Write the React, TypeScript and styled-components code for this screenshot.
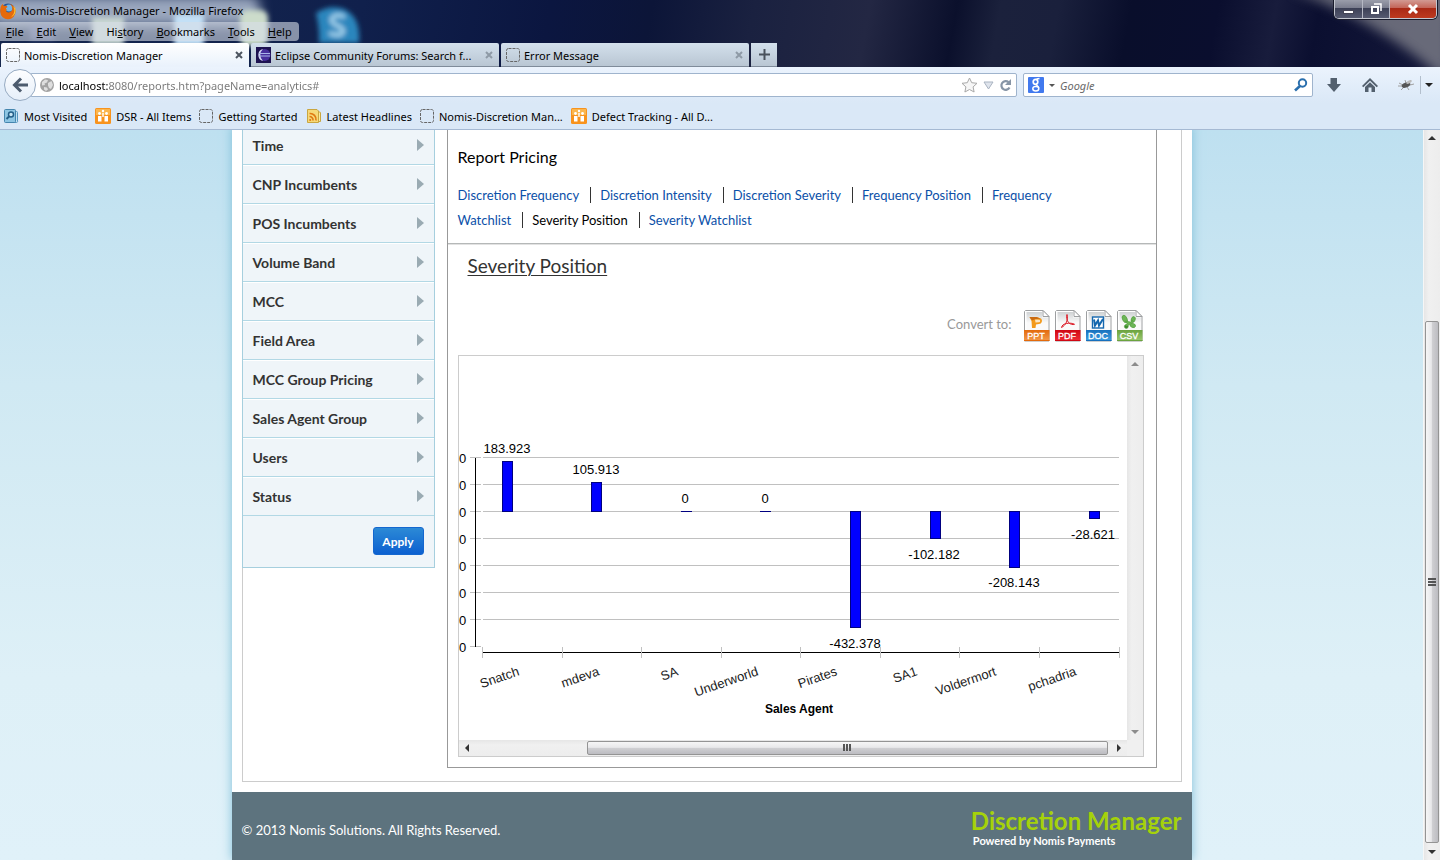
import React from "react";
import styled, { createGlobalStyle, css } from "styled-components";

const uiFont = `"Noto Sans", "Open Sans", sans-serif`;
const pageFont = `Lato, "Open Sans", sans-serif`;

const GlobalStyle = createGlobalStyle`
  * { box-sizing: border-box; }
  body { margin: 0; background: #0c1433; overflow: hidden; }
  button, input { font: inherit; }
  button { padding: 0; border: 0; background: none; color: inherit; }
  ul { list-style: none; margin: 0; padding: 0; }
`;

/* ---------- browser window ---------- */

const Window = styled.div`
  display: flex;
  flex-direction: column;
  height: 100vh;
  font-family: ${uiFont};
  font-size: 11px;
  color: #000;
`;

const TitleArea = styled.header`
  position: relative;
  isolation: isolate;
  display: flex;
  flex-direction: column;
  flex: none;
  overflow: hidden;
  background: linear-gradient(100deg, #16284e 0%, #10204c 25%, #0b1640 38%, #0c1538 45%, #1a2140 52%, #232743 60%, #0b102c 66%, #1b213c 69%, #1a203c 73%, #090e2b 78%, #0a0e2e 84%, #181c3c 88%, #0b0f30 91%, #14183a 100%);
`;

const Wallpaper = styled.svg`
  position: absolute;
  inset: 0;
  width: 100%;
  height: 100%;
  z-index: -1;
`;

const TitleRow = styled.div`
  display: flex;
  height: 22px;
`;

const WindowTitle = styled.h1`
  display: flex;
  align-items: center;
  gap: 5px;
  margin: 0;
  flex: 1;
  font-size: 11px;
  line-height: 20px;
  font-weight: 400;
`;

const WindowButtons = styled.div`
  display: flex;
  height: 19px;
  margin-right: 3px;
  border: 1px solid #c3c6cf;
  border-top: 0;
  border-radius: 0 0 5px 5px;
  overflow: hidden;
  box-shadow: 0 0 0 1px #1a1c2c;
`;

const WindowButton = styled.button<{ $close?: boolean }>`
  display: flex;
  align-items: center;
  justify-content: center;
  width: ${(p) => (p.$close ? 47 : 27)}px;
  background: ${(p) =>
    p.$close
      ? "linear-gradient(#d29a92 0, #c4675a 42%, #a92a16 46%, #bd3a20 100%)"
      : "linear-gradient(#9a9daa 0, #7b7e8f 42%, #3c4056 46%, #565a70 100%)"};
  & + & { border-left: 1px solid #b5b8c4; }
`;

const MenuBar = styled.nav`
  display: flex;
  align-self: flex-start;
  gap: 1px;
  height: 19px;
  padding-right: 1px;
  background: rgba(215, 221, 232, 0.6);
  border-radius: 0 4px 4px 0;
`;

const MenuItem = styled.button`
  padding: 0 6px;
  line-height: 19px;
`;

const TabStrip = styled.div`
  display: flex;
  gap: 2px;
  height: 24px;
  margin-top: 2px;
  padding-left: 1px;
`;

const Tab = styled.div<{ $active?: boolean }>`
  display: flex;
  align-items: center;
  gap: 4px;
  width: 248px;
  padding: 1px 6px 0 5px;
  background: ${(p) => (p.$active ? "linear-gradient(#ffffff, #eaf2fc)" : "linear-gradient(#d3e0ec, #b9c6d3)")};
  border-bottom: 1px solid ${(p) => (p.$active ? "#eaf2fc" : "#7f8b9a")};
  border-radius: 2px 2px 0 0;
`;

const TabLabel = styled.button`
  flex: 1;
  min-width: 0;
  text-align: left;
  white-space: nowrap;
`;

const IconButton = styled.button`
  display: flex;
  align-items: center;
  justify-content: center;
  flex: none;
`;

const NewTab = styled(IconButton)`
  width: 26px;
  background: linear-gradient(#d3e0ec, #b9c6d3);
  border-bottom: 1px solid #7f8b9a;
`;

const NavBar = styled.div`
  display: flex;
  align-items: center;
  flex: none;
  height: 36px;
  padding: 0 7px 0 4px;
  background: linear-gradient(#ebf3fd, #dae8f7);
`;

const BackButton = styled(IconButton)`
  width: 32px;
  height: 32px;
  border: 1px solid #97abc2;
  border-radius: 50%;
  background: linear-gradient(#fdfeff, #e6eff9);
  z-index: 1;
`;

const Field = styled.div<{ $grow?: boolean }>`
  display: flex;
  align-items: center;
  height: 24px;
  background: #fff;
  border: 1px solid #9fb4cd;
  border-radius: 2px;
  ${(p) =>
    p.$grow
      ? css`flex: 1; margin-left: -6px; padding: 0 4px 0 9px; gap: 5px;`
      : css`width: 290px; margin-left: 6px; padding: 0 4px; gap: 5px;`}
`;

const FieldInput = styled.input<{ $url?: boolean }>`
  flex: 1;
  min-width: 0;
  height: 20px;
  padding: 0;
  border: 0;
  outline: 0;
  background: transparent;
  &::placeholder { color: #6a6a6a; font-style: italic; opacity: 1; }
  ${(p) =>
    p.$url &&
    css`
      background: linear-gradient(90deg, #000 49px, #777 49px);
      background-clip: text;
      -webkit-background-clip: text;
      color: transparent;
    `}
`;

const FieldIcons = styled.div`
  display: flex;
  align-items: center;
  gap: 5px;
`;

const ToolButtons = styled.div`
  display: flex;
  align-items: center;
  gap: 20px;
  margin-left: 13px;
`;

const ToolMenu = styled(IconButton)`
  height: 18px;
  padding-left: 4px;
  margin-left: 6px;
  border-left: 1px solid #b3bfcd;
`;

const BookmarkBar = styled.nav`
  display: flex;
  align-items: center;
  flex: none;
  gap: 8px;
  height: 27px;
  padding: 0 3px;
  background: #dae8f7;
  border-bottom: 1px solid #a5b9d3;
`;

const Bookmark = styled.a`
  display: flex;
  align-items: center;
  gap: 5px;
  color: #000;
  text-decoration: none;
  white-space: nowrap;
`;

/* ---------- scroll bars ---------- */

type Axis = "x" | "y";

const Track = styled.div<{ $axis: Axis }>`
  display: flex;
  flex: none;
  flex-direction: ${(p) => (p.$axis === "y" ? "column" : "row")};
  ${(p) => (p.$axis === "y" ? "width: 16px;" : "height: 16px;")}
  background: linear-gradient(${(p) => (p.$axis === "y" ? "90deg" : "180deg")}, #e6e6e6, #f0f0f0 30%, #ededed);
`;

const ScrollArrow = styled(IconButton)`
  width: 16px;
  height: 16px;
`;

const Gap = styled.div<{ $size: number }>`
  flex: ${(p) => p.$size} 0 0;
`;

const Thumb = styled.div<{ $axis: Axis; $size: number }>`
  flex: ${(p) => p.$size} 0 0;
  display: flex;
  align-items: center;
  justify-content: center;
  margin: ${(p) => (p.$axis === "y" ? "0 1px" : "1px 0")};
  border: 1px solid #949494;
  border-radius: 2px;
  background: linear-gradient(${(p) => (p.$axis === "y" ? "90deg" : "180deg")}, #f6f6f6 0, #e8e8ea 45%, #cfcfd2 52%, #bcbcc1 100%);
`;

const arrowPath = { up: "M0 6L4 2L8 6Z", down: "M0 2L4 6L8 2Z", left: "M6 0L2 4L6 8Z", right: "M2 0L6 4L2 8Z" };

function ScrollBar({ axis, before, size, after }: { axis: Axis; before: number; size: number; after: number }) {
  const first = axis === "y" ? "up" : "left";
  const last = axis === "y" ? "down" : "right";
  const ink = size ? "#333" : "#8c8c8c";
  return (
    <Track $axis={axis}>
      <ScrollArrow aria-label={`Scroll ${first}`}>
        <svg width="8" height="8"><path d={arrowPath[first]} fill={ink} /></svg>
      </ScrollArrow>
      <Gap $size={before} />
      {size > 0 && (
        <Thumb $axis={axis} $size={size}>
          <svg width="8" height="8" stroke="#555" strokeWidth="2">
            {axis === "y" ? <path d="M0 1H8M0 4H8M0 7H8" /> : <path d="M1 0V7M4 0V7M7 0V7" />}
          </svg>
        </Thumb>
      )}
      <Gap $size={after} />
      <ScrollArrow aria-label={`Scroll ${last}`}>
        <svg width="8" height="8"><path d={arrowPath[last]} fill={ink} /></svg>
      </ScrollArrow>
    </Track>
  );
}

/* ---------- web page ---------- */

const Viewport = styled.div`
  display: flex;
  flex: 1;
  min-height: 0;
`;

const Canvas = styled.div`
  display: flex;
  justify-content: center;
  flex: 1;
  min-width: 0;
  overflow: hidden;
  background: linear-gradient(#bee0f0 0, #d0e9f3 35%, #def0f7 75%, #e0f1f9 100%);
  border-right: 1px solid #f6f6f6;
  font-family: ${pageFont};
`;

const Page = styled.div`
  display: flex;
  flex-direction: column;
  width: 100%;
  max-width: 960px;
  margin-top: -4px;
  background: #fff;
  box-shadow: 0 0 10px #7fc0d8;
`;

const Body = styled.div`
  display: flex;
  align-items: flex-start;
  gap: 12px;
  margin: 0 10px 10px;
  padding: 0 24px 13px 0;
  border: 1px solid #ccc;
  border-top: 0;
  border-left: 0;
  box-shadow: inset 1px 0 #ccc;
`;

const Filters = styled.aside`
  width: 193px;
  flex: none;
  background: #eff5f9;
  border: 1px solid #a6cfde;
  border-top: 0;
`;

const FilterRow = styled.button`
  display: flex;
  align-items: center;
  justify-content: space-between;
  width: 100%;
  height: 39px;
  padding: 0 10px;
  border-bottom: 1px solid #b2d8e5;
  box-shadow: inset 0 1px #fff;
  font-size: 14px;
  font-weight: 700;
  color: #333;
`;

const FilterActions = styled.div`
  display: flex;
  justify-content: flex-end;
  padding: 11px 10px 12px;
`;

const ApplyButton = styled.button`
  width: 51px;
  height: 28px;
  border: 1px solid #1467cf;
  border-radius: 3px;
  background: linear-gradient(#2c8ad6, #0c60d0);
  color: #fff;
  font-size: 12px;
  font-weight: 700;
`;

const Panel = styled.main`
  flex: 1;
  min-width: 0;
  border: 1px solid #999;
  border-top: 0;
`;

const PanelHead = styled.div`
  padding: 19px 80px 10px 10px;
  border-bottom: 1px solid #b5b8b8;
  box-shadow: 0 1px #e2e2e2;
`;

const PanelTitle = styled.h2`
  margin: 0 0 14px;
  font-size: 16px;
  line-height: 24px;
  font-weight: 400;
`;

const ReportItem = styled.li`
  display: inline;
  font-size: 13px;
  line-height: 25px;
  &:not(:last-child) { border-right: 1px solid #333; margin-right: 9px; padding-right: 11px; }
`;

const ReportLink = styled.a<{ $current?: boolean }>`
  color: ${(p) => (p.$current ? "#000" : "#0b50a8")};
  text-decoration: none;
`;

const Report = styled.section`
  padding: 9px 12px 10px 10px;
`;

const ReportTitle = styled.h3`
  margin: 0 10px 31px;
  font-size: 19px;
  line-height: 26px;
  font-weight: 400;
  color: #333;
  text-decoration: underline;
  text-decoration-thickness: 1px;
  text-underline-offset: 2px;
`;

const Convert = styled.div`
  display: flex;
  align-items: center;
  justify-content: flex-end;
  gap: 5px;
  height: 32px;
  margin-bottom: 13px;
  padding-right: 1px;
  font-size: 13px;
  color: #999;
`;

const ConvertLabel = styled.span`
  margin-right: 7px;
  padding-bottom: 4px;
`;

const FileLink = styled.a`
  display: flex;
`;

const ChartFrame = styled.div`
  display: grid;
  grid-template-columns: minmax(0, 1fr) 16px;
  grid-template-rows: 384px 16px;
  border: 1px solid #ccc;
  background: #f0f0f0;
`;

const ChartPane = styled.div`
  overflow: hidden;
  background: #fff;
`;

const Footer = styled.footer`
  display: flex;
  justify-content: space-between;
  flex: 1 0 auto;
  padding: 14px 10px;
  background: #5d737e;
  color: #fff;
`;

const Copyright = styled.p`
  margin: 12px 0;
  font-size: 13px;
  line-height: 24px;
`;

const Brand = styled.div`
  color: #a5d20a;
  font-size: 24px;
  line-height: 30px;
  font-weight: 700;
`;

const BrandNote = styled.div`
  padding-left: 2px;
  color: #fff;
  font-size: 11px;
  line-height: 10px;
`;

/* ---------- icons ---------- */

const BlankIcon = () => (
  <svg width="14" height="14" fill="none" stroke="#666" strokeDasharray="3 1">
    <rect x=".5" y=".5" width="13" height="13" rx="2" />
  </svg>
);

const FirefoxIcon = () => (
  <svg width="16" height="18" viewBox="0 0 16 18">
    <circle cx="8" cy="9" r="7.5" fill="#24579c" />
    <circle cx="9" cy="6" r="3.5" fill="#72b5e8" />
    <path d="M.3 7C.5 4 2 2.500 3 2c0 1 .5 1.600 1 2 2-.5 3 0 3.500 1L5.500 6.500C7 7 7 8 6 9c1 2 4 2 6-.5 1-2-.2-5-2-6.500 3 .5 5.500 4 5.500 7.500A7.500 7.500 0 0 1 .3 10Z" fill="#e66a0c" />
    <path d="M13 4c2 3 2 8-2 11 3-1 5-4 4.600-7.500C15.300 6 14.500 5 13 4Z" fill="#f9c433" />
  </svg>
);

const EclipseIcon = () => (
  <svg width="15" height="16" viewBox="0 0 15 16">
    <rect width="15" height="16" fill="#1d1250" />
    <circle cx="8.500" cy="8" r="6" fill="#47309c" />
    <path d="M7 2A6.200 6.200 0 0 0 7 14A8 8 0 0 1 7 2Z" fill="#d8dcf4" />
    <path d="M3 6.500H14M3 9H14" stroke="#a9b4ea" />
  </svg>
);

const CloseIcon = ({ dim }: { dim?: boolean }) => (
  <svg width="8" height="8" stroke={dim ? "#8e9aa6" : "#4d5560"} strokeWidth="2"><path d="M1 1L7 7M7 1L1 7" /></svg>
);

const GlobeIcon = () => (
  <svg width="14" height="14">
    <circle cx="7" cy="7" r="7" fill="#a3a3a3" />
    <path d="M2 4L5 1.500 8 2 7 4.500 4.500 5.500 5 7 2 7.500ZM8 5l3.500-2L13 7l-2 4-2-1-1-2.500ZM4 9l3 .5 1 2-2 1.500-2-1.500Z" fill="#dedede" />
  </svg>
);

const MostVisitedIcon = () => (
  <svg width="16" height="16">
    <path d="M11 3.500h2.500a1 1 0 0 1 1 1V13a1 1 0 0 1-1 1.500H11Z" fill="#c4e2f2" stroke="#5596be" />
    <rect x="1.500" y="1.500" width="11" height="13" rx="1" fill="#8dc5e3" stroke="#4485ae" />
    <circle cx="8" cy="6.500" r="2.500" fill="#c8e6f5" stroke="#235f89" strokeWidth="1.500" />
    <path d="M6 8.500L3.500 11" stroke="#235f89" strokeWidth="2" />
  </svg>
);

const PeopleIcon = () => (
  <svg width="16" height="16">
    <rect width="16" height="16" rx="1.500" fill="#f8931d" />
    <rect x="1" y="1" width="14" height="6" fill="#fbb64e" />
    <circle cx="4.500" cy="5.500" r="1.400" fill="#fff" /><circle cx="11.500" cy="5.500" r="1.400" fill="#fff" /><circle cx="8" cy="3" r="1.200" fill="#fff" />
    <path d="M3 8h3.500v5.500H3ZM9.500 8H13v5.500H9.500ZM7.300 5h1.400v4H7.300Z" fill="#fff" />
  </svg>
);

const FeedIcon = () => (
  <svg width="16" height="16" fill="none">
    <path d="M11 4h2.500a1 1 0 0 1 1 1v8.500H11Z" fill="#fbeaa0" stroke="#c9a640" />
    <path d="M1.500 1.500H11L12.500 3V14.500H1.500Z" fill="#f6d978" stroke="#c9a640" />
    <path d="M3.500 5.500a6 6 0 0 1 6.500 7M3.500 8.500a3.500 3.500 0 0 1 3.500 4" stroke="#e07912" strokeWidth="1.600" />
    <circle cx="4.200" cy="12" r="1.100" fill="#e07912" />
  </svg>
);

const StarIcon = () => (
  <svg width="17" height="16"><path d="M8.500 1l2.200 4.700 5.300.6-3.900 3.600 1 5.100-4.600-2.500L3.900 15l1-5.100L1 6.300l5.300-.6Z" fill="#f6f6f6" stroke="#a8a8a8" /></svg>
);

const ReloadIcon = () => (
  <svg width="13" height="13" fill="none">
    <path d="M9.500 3.200A4.300 4.300 0 1 0 10.500 8.500" stroke="#8795a6" strokeWidth="2.200" />
    <path d="M12 0V6H6Z" fill="#8795a6" />
  </svg>
);

const GoogleIcon = () => (
  <svg width="16" height="16">
    <rect width="16" height="16" rx="1" fill="#4179ee" />
    <g fill="none" stroke="#fff">
      <ellipse cx="7.500" cy="4.800" rx="2.300" ry="2.500" strokeWidth="1.700" />
      <path d="M8.500 2L11.500 1.500M9 6.500C6.500 8 10.500 8.500 10.800 11" strokeWidth="1.400" />
      <ellipse cx="7.800" cy="11.700" rx="3" ry="2.200" strokeWidth="1.500" />
    </g>
  </svg>
);

const SearchIcon = () => (
  <svg width="14" height="14" fill="none" stroke="#2a6fad" strokeWidth="2">
    <circle cx="8.500" cy="5" r="3.700" /><path d="M6 8L1 12.500" strokeWidth="2.600" />
  </svg>
);

const BugIcon = () => (
  <svg width="16" height="14" fill="none" stroke="#a0a0a0">
    <path d="M1 5l4 2M0 8l5 0M3 12l3-3M13 2l-2 3M16 6l-4 1M11 12L9 9M7 2l1 3" />
    <ellipse cx="8" cy="7" rx="4.500" ry="2.400" fill="#555" stroke="none" transform="rotate(-20 8 7)" />
    <ellipse cx="11" cy="4" rx="3" ry="1.500" fill="#bbb" stroke="none" transform="rotate(-25 11 4)" />
  </svg>
);

const Caret = ({ w = 8, fill = "#555" }: { w?: number; fill?: string }) => (
  <svg width={w} height={w / 2}><path d={`M0 0H${w}L${w / 2} ${w / 2}Z`} fill={fill} /></svg>
);

type FileKind = "PPT" | "PDF" | "DOC" | "CSV";

const fileColor: Record<FileKind, [string, string]> = {
  PPT: ["#f39a4a", "#e36a0c"],
  PDF: ["#f02c35", "#cf0713"],
  DOC: ["#3f9fe2", "#1770bd"],
  CSV: ["#9cc971", "#6ba33e"],
};

const fileMark: Record<FileKind, React.ReactNode> = {
  PPT: (
    <g>
      <path d="M5.500 7h7l4.500 1.500a3.200 3.200 0 0 1-2 5.500L12 14.500 11.500 18H8L7.500 11Z" fill="#f39a1c" />
      <path d="M11 9.500l4 .3a1 1 0 0 1 0 2.400l-3.500.3Z" fill="#fbe6c4" />
      <path d="M5.500 7h7l4 1.500-5.500.7-3 1.300Z" fill="#c96a12" />
    </g>
  ),
  PDF: (
    <path d="M12 4.500c-1 2 0 6 1.500 8 1.500 1.800 4.500 2.500 6 1.800-2-1.300-5-1.300-8-.8s-4.500 1.800-5 4c2-1 4-3 5-5.500s1.200-5.500.5-7.500Z" fill="none" stroke="#dc1c28" strokeWidth="1" />
  ),
  DOC: (
    <g fill="none" stroke="#1467ae">
      <rect x="6.500" y="7" width="11" height="11" fill="#fff" strokeWidth="1.400" />
      <path d="M8 9.500l1 6L12 10.500l1 5L17 9" strokeWidth="2" />
    </g>
  ),
  CSV: (
    <g fill="#6cb556" stroke="#4f9c3a" strokeWidth=".6">
      <ellipse cx="7.800" cy="9" rx="2.300" ry="4" transform="rotate(-25 7.800 9)" />
      <ellipse cx="16.200" cy="9.500" rx="2" ry="3" transform="rotate(20 16.200 9.500)" />
      <ellipse cx="15.800" cy="15.500" rx="2.800" ry="2" transform="rotate(20 15.800 15.500)" />
      <circle cx="9.300" cy="16.500" r="1.900" fill="#3d8a2c" />
      <path d="M8.500 11l5 1 2-1.500.5 1.200-2 2.300-4 2-1.500-.5 1.500-2Z" />
    </g>
  ),
};

function FileIcon({ kind }: { kind: FileKind }) {
  const [top, bottom] = fileColor[kind];
  return (
    <svg width="26" height="32" viewBox="0 0 26 32">
      <defs>
        <linearGradient id={`paper${kind}`} x2="0" y2="1"><stop stopColor="#cfd2d4" /><stop offset=".6" stopColor="#fafafa" /></linearGradient>
        <linearGradient id={`band${kind}`} x2="0" y2="1"><stop stopColor={bottom} /><stop offset="1" stopColor={top} /></linearGradient>
      </defs>
      <path d="M1.500.5H19L25 6.500V31H.5V1.500Z" fill="#fff" stroke="#9d9fa1" />
      <path d="M2.500 2H18V7.500H24V20H2.500Z" fill={`url(#paper${kind})`} />
      <path d="M19 .5V6.500H25Z" fill="#fff" stroke="#9d9fa1" />
      {fileMark[kind]}
      <rect x="0" y="20" width="25.500" height="11" fill={`url(#band${kind})`} />
      <path d="M0 30.500H25.500" stroke={bottom} />
      <text x="12" y="28.500" textAnchor="middle" fontFamily="Liberation Sans, Arial, sans-serif" fontSize="9" fill="#fff" stroke="#fff" strokeWidth=".3">{kind}</text>
    </svg>
  );
}

/* ---------- chart ---------- */

const agents = [
  { name: "Snatch", value: "183.923", x: 43, top: 105, height: 51, labelX: 48, labelY: 97 },
  { name: "mdeva", value: "105.913", x: 132, top: 126, height: 30, labelX: 137, labelY: 118 },
  { name: "SA", value: "0", x: 222, top: 155, height: 1, labelX: 226, labelY: 147 },
  { name: "Underworld", value: "0", x: 301, top: 155, height: 1, labelX: 306, labelY: 147 },
  { name: "Pirates", value: "-432.378", x: 391, top: 155, height: 117, labelX: 396, labelY: 292 },
  { name: "SA1", value: "-102.182", x: 471, top: 155, height: 28, labelX: 475, labelY: 203 },
  { name: "Voldermort", value: "-208.143", x: 550, top: 155, height: 57, labelX: 555, labelY: 231 },
  { name: "pchadria", value: "-28.621", x: 630, top: 155, height: 8, labelX: 634, labelY: 183 },
];
const gridRows = [0, 1, 2, 3, 4, 5, 6, 7];
const ticks = [23, 103, 182, 262, 341, 421, 500, 580, 660];

function Chart() {
  return (
    <svg width="668" height="384" fontFamily="Liberation Sans, Arial, sans-serif" fontSize="13" role="img" aria-label="Severity position by sales agent">
      <g shapeRendering="crispEdges">
        {gridRows.map((i) => (
          <path key={i} d={`M11 ${101.5 + i * 27}H22${i < 7 ? "M24 " + (101.5 + i * 27) + "H660" : ""}`} stroke="#c0c0c0" />
        ))}
        <path d="M16.500 102V291M24 296.500H661" stroke="#000" />
        {ticks.map((x) => <path key={x} d={`M${x + 0.5} 291V302`} stroke="#c0c0c0" />)}
        {agents.map((a) => (
          <g key={a.name}>
            <rect x={a.x} y={a.top} width="11" height={a.height} fill="#000080" />
            {a.height > 1 && <rect x={a.x + 1} y={a.top + 1} width="9" height={a.height - 2} fill="#0000ff" />}
          </g>
        ))}
      </g>
      {gridRows.map((i) => <text key={i} x="0" y={107 + i * 27}>0</text>)}
      {agents.map((a, i) => (
        <g key={a.name}>
          <text x={a.labelX} y={a.labelY} textAnchor="middle">{a.value}</text>
          <text x={ticks[i] + 38} y="319" textAnchor="end" transform={`rotate(-19 ${ticks[i] + 38} 319)`} fill="#222">{a.name}</text>
        </g>
      ))}
      <text x="340" y="357" textAnchor="middle" fontSize="12" fontWeight="700">Sales Agent</text>
    </svg>
  );
}

/* ---------- content ---------- */

const menus: [string, string, string][] = [
  ["", "F", "ile"], ["", "E", "dit"], ["", "V", "iew"], ["Hi", "s", "tory"], ["", "B", "ookmarks"], ["", "T", "ools"], ["", "H", "elp"],
];

const bookmarks: [string, React.ReactNode][] = [
  ["Most Visited", <MostVisitedIcon />],
  ["DSR - All Items", <PeopleIcon />],
  ["Getting Started", <BlankIcon />],
  ["Latest Headlines", <FeedIcon />],
  ["Nomis-Discretion Man...", <BlankIcon />],
  ["Defect Tracking - All D...", <PeopleIcon />],
];

const filters = ["Time", "CNP Incumbents", "POS Incumbents", "Volume Band", "MCC", "Field Area", "MCC Group Pricing", "Sales Agent Group", "Users", "Status"];

const reports = [
  ["Discretion", "Frequency"],
  ["Discretion", "Intensity"],
  ["Discretion", "Severity"],
  ["Frequency", "Position"],
  ["Frequency", "Watchlist"],
  ["Severity", "Position"],
  ["Severity", "Watchlist"],
];
const currentReport = "Severity Position";

const kinds: FileKind[] = ["PPT", "PDF", "DOC", "CSV"];

export default function App() {
  return (
    <Window>
      <GlobalStyle />
      <TitleArea>
        <Wallpaper aria-hidden="true">
          <defs>
            <filter id="glass" x="-50%" y="-100%" width="200%" height="300%"><feGaussianBlur stdDeviation="6" /></filter>
            <filter id="soft" x="-20%" y="-20%" width="140%" height="140%"><feGaussianBlur stdDeviation="2.500" /></filter>
          </defs>
          <g filter="url(#glass)">
            <rect x="-10" y="-4" width="270" height="30" rx="10" fill="#a9b6cb" opacity=".9" />
          </g>
          <g filter="url(#soft)">
            <rect x="174" y="14" width="30" height="32" fill="#c3e0f6" />
            <rect x="240" y="10" width="28" height="36" rx="8" fill="#ccdccb" />
            <rect x="92" y="17" width="32" height="28" fill="#c8d6d2" />
            <rect x="30" y="24" width="24" height="16" fill="#6b6fa8" opacity=".6" />
          </g>
          <g filter="url(#soft)">
            <path d="M316 13q14-9 28-4 17 8 15 34h-40q1-14-3-30Z" fill="#2c86bd" />
            <path d="M345 17c-12-5-18 4-9 8 12 4 8 14-7 8" fill="none" stroke="#a4d4ee" strokeWidth="4" />
          </g>
          <svg x="100%" overflow="visible">
            <path d="M-150-10Q-60 20 10 85V-10Z" fill="#85868f" opacity=".75" filter="url(#glass)" />
          </svg>
        </Wallpaper>
        <TitleRow>
          <WindowTitle><FirefoxIcon />Nomis-Discretion Manager - Mozilla Firefox</WindowTitle>
          <WindowButtons>
            <WindowButton aria-label="Minimize"><svg width="11" height="12"><rect x=".5" y="7.500" width="10" height="3" fill="#fff" stroke="#445" /></svg></WindowButton>
            <WindowButton aria-label="Restore">
              <svg width="12" height="12" fill="none" stroke="#fff"><path d="M4 1H11V8" strokeWidth="1.500" /><rect x="2" y="4" width="6" height="6" strokeWidth="2" /></svg>
            </WindowButton>
            <WindowButton $close aria-label="Close"><svg width="12" height="12" stroke="#fff" strokeWidth="3"><path d="M2 2L10 10M10 2L2 10" /></svg></WindowButton>
          </WindowButtons>
        </TitleRow>
        <MenuBar>
          {menus.map(([a, b, c]) => <MenuItem key={b + c}>{a}<u>{b}</u>{c}</MenuItem>)}
        </MenuBar>
        <TabStrip>
          <Tab $active><BlankIcon /><TabLabel>Nomis-Discretion Manager</TabLabel><IconButton aria-label="Close tab"><CloseIcon /></IconButton></Tab>
          <Tab><EclipseIcon /><TabLabel>Eclipse Community Forums: Search f...</TabLabel><IconButton aria-label="Close tab"><CloseIcon dim /></IconButton></Tab>
          <Tab><BlankIcon /><TabLabel>Error Message</TabLabel><IconButton aria-label="Close tab"><CloseIcon dim /></IconButton></Tab>
          <NewTab aria-label="New tab"><svg width="11" height="11" stroke="#4a525c" strokeWidth="2"><path d="M5.500 0V11M0 5.500H11" /></svg></NewTab>
        </TabStrip>
      </TitleArea>

      <NavBar>
        <BackButton aria-label="Back">
          <svg width="16" height="16" fill="none" stroke="#4d5c6e" strokeWidth="3"><path d="M9 1.500L2.500 8L9 14.500M3 8H16" /></svg>
        </BackButton>
        <Field $grow>
          <GlobeIcon />
          <FieldInput $url aria-label="Address" defaultValue="localhost:8080/reports.htm?pageName=analytics#" />
          <FieldIcons>
            <IconButton aria-label="Bookmark this page"><StarIcon /></IconButton>
            <IconButton aria-label="History">
              <svg width="11" height="9"><path d="M1 1H10L5.500 8Z" fill="#dfe4ec" stroke="#a9b3c1" /></svg>
            </IconButton>
            <IconButton aria-label="Reload"><ReloadIcon /></IconButton>
          </FieldIcons>
        </Field>
        <Field>
          <GoogleIcon />
          <Caret w={6} />
          <FieldInput aria-label="Search" placeholder="Google" />
          <IconButton aria-label="Search"><SearchIcon /></IconButton>
        </Field>
        <ToolButtons>
          <IconButton aria-label="Downloads"><svg width="16" height="16"><path d="M4.500 1H11V7H15L8 15L1 7H4.500Z" fill="#53606e" /></svg></IconButton>
          <IconButton aria-label="Home">
            <svg width="16" height="16" fill="#53606e"><path d="M8 1L16 9 14.700 10.300 8 3.800 1.300 10.300 0 9Z" /><path d="M3 10L8 5.200 13 10V15H9.500V10.500H6.500V15H3Z" /></svg>
          </IconButton>
          <IconButton aria-label="Firebug"><BugIcon /></IconButton>
        </ToolButtons>
        <ToolMenu aria-label="Firebug menu"><Caret fill="#222" /></ToolMenu>
      </NavBar>
      <BookmarkBar>
        {bookmarks.map(([name, icon]) => <Bookmark href="#" key={name}>{icon}{name}</Bookmark>)}
      </BookmarkBar>

      <Viewport>
        <Canvas>
          <Page>
            <Body>
              <Filters>
                {filters.map((f) => (
                  <FilterRow key={f}>{f}<svg width="7" height="12"><path d="M0 0L7 6L0 12Z" fill="#9aabb3" /></svg></FilterRow>
                ))}
                <FilterActions><ApplyButton>Apply</ApplyButton></FilterActions>
              </Filters>
              <Panel>
                <PanelHead>
                  <PanelTitle>Report Pricing</PanelTitle>
                  <ul>
                    {reports.map(([measure, view]) => {
                      const name = `${measure} ${view}`;
                      return (
                        <ReportItem key={name}>
                          <ReportLink href="#" $current={name === currentReport}><span>{measure}</span> <span>{view}</span></ReportLink>
                        </ReportItem>
                      );
                    })}
                  </ul>
                </PanelHead>
                <Report>
                  <ReportTitle>Severity Position</ReportTitle>
                  <Convert>
                    <ConvertLabel>Convert to:</ConvertLabel>
                    {kinds.map((k) => <FileLink href="#" key={k}><FileIcon kind={k} /></FileLink>)}
                  </Convert>
                  <ChartFrame>
                    <ChartPane><Chart /></ChartPane>
                    <ScrollBar axis="y" before={1} size={0} after={0} />
                    <ScrollBar axis="x" before={113} size={521} after={3} />
                  </ChartFrame>
                </Report>
              </Panel>
            </Body>
            <Footer>
              <Copyright>© 2013 Nomis Solutions. All Rights Reserved.</Copyright>
              <Brand>Discretion Manager<BrandNote>Powered by Nomis Payments</BrandNote></Brand>
            </Footer>
          </Page>
        </Canvas>
        <ScrollBar axis="y" before={175} size={522} after={1} />
      </Viewport>
    </Window>
  );
}
